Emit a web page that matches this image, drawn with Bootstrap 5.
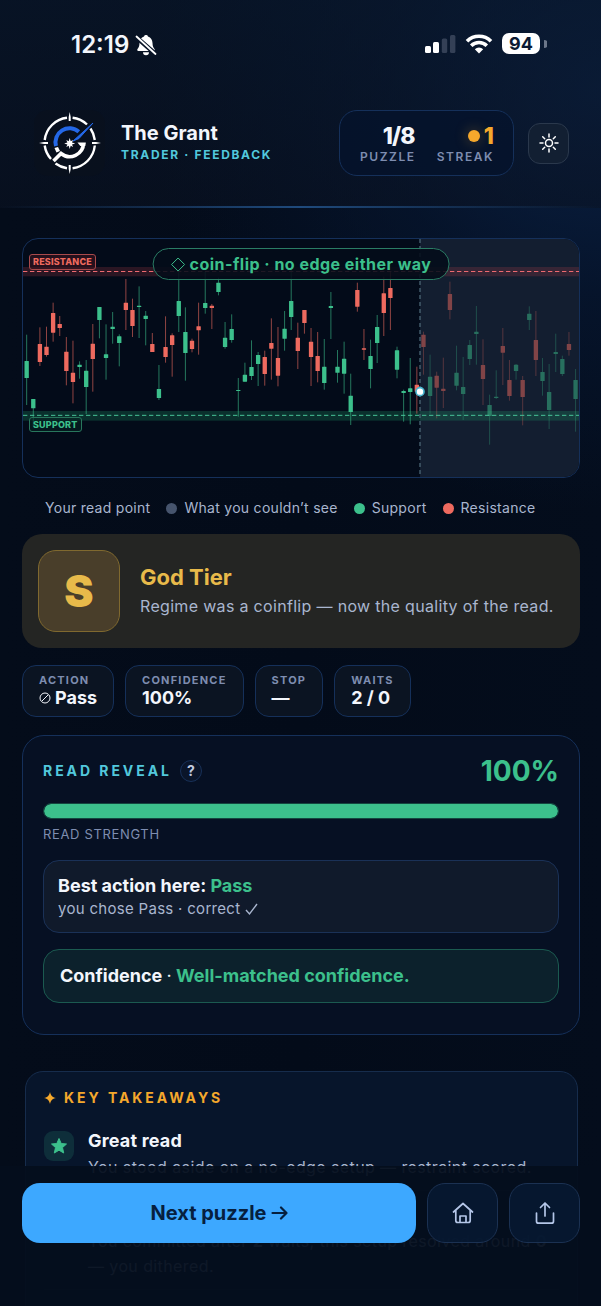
<!DOCTYPE html>
<html lang="en" data-bs-theme="dark">
<head>
<meta charset="utf-8">
<meta name="viewport" content="width=device-width, initial-scale=1">
<title>The Grant – Trader Feedback</title>
<link href="https://cdn.jsdelivr.net/npm/bootstrap@5.3.0/dist/css/bootstrap.min.css" rel="stylesheet">
<style>
  :root { --line:#15305a; --green:#3cc08c; --red:#ee6a5f; --amber:#f5a82c; --gold:#e8ba4a; --cyan:#52c8dc; --soft:#a9b6cf; --dim:#7e8db0; }
  body { font-family: Inter, "Liberation Sans", sans-serif; color:#f3f6fc; background:#030b19; }
  .screen { background: radial-gradient(ellipse 75% 420px at 100% 90px, #0a2145 0%, rgba(7,24,52,.6) 50%, transparent 100%), linear-gradient(90deg,#040c1a,#030b19 50%,#040d1c); overflow-y:auto; scrollbar-width:none; }
  .top-zone { background: linear-gradient(180deg, rgba(10,24,44,.6), rgba(10,18,34,.55)); }
  .top-rule { height:2px; background:linear-gradient(90deg, transparent, #1f4a7c 50%, transparent); }
  .status { padding:31px 54px 0 71px; height:78px; }
  .clock-row { gap:6px; }
  .clock { font-size:24px; line-height:28px; font-weight:600; }
  .signals { margin-top:2px; gap:9px; }
  .battery { width:38px; height:21px; border-radius:7px; background:#fff; color:#0b1a33; font-size:18px; line-height:21px; font-weight:700; }
  .brandbar { padding:32px 32px 30px 34px; }
  .brand-name { font-size:20px; line-height:24px; font-weight:700; }
  .brand-sub { font-size:12px; line-height:20px; font-weight:700; letter-spacing:.14em; color:var(--cyan); }
  .stats { border:1px solid var(--line); border-radius:18px; background:rgba(4,18,44,.7); padding:12px 20px 10px; gap:22px; margin-right:14px; }
  .stat-num { font-size:23px; line-height:26px; font-weight:800; letter-spacing:-.04em; }
  .stat-label { font-size:12px; line-height:16px; font-weight:600; letter-spacing:.13em; color:var(--dim); margin-right:-1px; }
  .streak-dot { width:12px; height:12px; border-radius:50%; background:var(--amber); box-shadow:0 0 14px rgba(245,168,44,.35); }
  .btn-theme { width:41px; height:41px; border-radius:12px; border:1px solid #2a384c; background:#121f32; color:#fff; }
  main { padding:30px 21px 160px 22px; }
  .chart { border:1px solid var(--line); border-radius:16px; background:#030b19; overflow:hidden; }
  .level { position:absolute; left:6px; font-size:9px; font-weight:800; letter-spacing:.02em; line-height:13px; padding:0 3px; border:1px solid; border-radius:3px; }
  .level-res { top:15px; color:var(--red); border-color:#a94a4c; background:rgba(60,20,30,.6); line-height:14px; }
  .level-sup { top:178px; color:var(--green); border-color:#28765c; background:rgba(6,34,34,.6); }
  .regime { position:absolute; top:9px; left:50%; transform:translateX(-50%); white-space:nowrap; padding:0 17px; line-height:30px; font-size:16px; font-weight:700; letter-spacing:.03em; color:var(--green); border:1px solid #2a7c64; border-radius:16px; background:rgba(3,13,25,.88); }
  .legend { font-size:14px; line-height:20px; letter-spacing:.02em; color:var(--soft); padding:20px 0 16px 23px; gap:16px; }
  .key { width:11px; height:11px; border-radius:50%; margin-right:7px; }
  .tier { border-radius:20px; background:#242523; padding:16px; gap:20px; }
  .tier-mark { width:82px; height:82px; border-radius:18px; border:1px solid #80692f; background:#493e2a; color:var(--gold); font-size:44px; line-height:48px; font-weight:900; }
  .tier-name { font-size:22px; line-height:30px; font-weight:700; color:var(--gold); }
  .tier-text { font-size:16px; line-height:28px; letter-spacing:.02em; color:var(--soft); white-space:nowrap; }
  .facts { gap:11px; padding:17px 0 18px; }
  .fact { border:1px solid var(--line); border-radius:14px; background:#0b1422; padding:7px 16px 9px; }
  .fact-label { font-size:11px; line-height:15px; font-weight:700; letter-spacing:.11em; color:var(--dim); }
  .fact-value { font-size:18px; line-height:19px; font-weight:700; }
  .reveal { border:1px solid var(--line); border-radius:22px; background:#061023; padding:17px 20px 31px; }
  .reveal-title { font-size:14px; line-height:20px; font-weight:700; letter-spacing:.21em; color:var(--cyan); }
  .btn-help { width:22px; height:22px; border:1px solid #173058; border-radius:50%; background:#0a152a; color:#c3cce0; font-size:14px; line-height:20px; font-weight:700; }
  .score { font-size:28px; line-height:36px; font-weight:700; color:var(--green); }
  .meter { height:16px; border-radius:8px; border:1px solid #14463f; background:#0a1a2a; margin:14px 0 5px; }
  .meter .progress-bar { background:var(--green); border-radius:8px; }
  .meter-label { font-size:13px; line-height:20px; letter-spacing:.05em; color:var(--dim); }
  .note { border:1px solid #1a3157; border-radius:16px; background:#101a2b; padding:13px 14px 12px; }
  .note-title { font-size:18px; line-height:24px; font-weight:700; }
  .note-text { font-size:15px; line-height:22px; letter-spacing:.02em; color:var(--soft); }
  .note-good { border-color:#1b5a50; background:#0c212c; padding:14px 16px; }
  .takeaways { border:1px solid #162c4c; border-radius:18px; background:#07152b; margin:36px 2px 0 3px; padding:16px 18px; }
  .takeaways-title { font-size:14px; line-height:20px; font-weight:700; letter-spacing:.21em; color:var(--amber); }
  .takeaway { gap:14px; padding:19px 0 10px; }
  .takeaway + .takeaway { border-top:1px solid #14243d; padding-top:10px; }
  .tile { width:30px; height:30px; border-radius:9px; background:#0e2e3a; color:var(--green); margin-top:4px; }
  .takeaway-title { font-size:18px; line-height:28px; min-height:28px; font-weight:700; letter-spacing:.01em; }
  .takeaway-text { font-size:16px; line-height:25px; letter-spacing:.025em; color:var(--soft); }
  .dock { background:rgba(4,14,29,.94); padding:17px 21px 63px 22px; gap:11px; }
  .btn-next { height:60px; border-radius:18px; background:#3da8ff; color:#06203f; font-size:20px; font-weight:700; border:0; }
  .btn-dock { width:71px; height:60px; border-radius:18px; border:1px solid #1b3152; background:rgba(7,26,51,.85); color:#b4c6e8; }
  .text-good { color:var(--green); }
</style>
</head>
<body class="vh-100 overflow-hidden">
<div class="screen h-100">
  <div class="top-zone">
    <div class="status d-flex justify-content-between align-items-start">
      <div class="clock-row d-flex align-items-center">
        <span class="clock">12:19</span>
        <svg width="22" height="22" viewBox="0 0 22 22"><path fill="#fff" d="M11 1a2 2 0 0 1 2 1.400C16 3.300 17.300 5.700 17.500 9c.1 3.500.9 4.600 2 6 .6.900.2 1.900-.8 1.900H3.300c-1 0-1.400-1-.8-1.900 1.100-1.400 1.900-2.500 2-6C4.700 5.700 6 3.300 9 2.400A2 2 0 0 1 11 1zM8 18.200h6a3 3 0 0 1-6 0z"/><path stroke="#091427" stroke-width="4.500" d="M1 3l19.500 17"/><path stroke="#fff" stroke-width="1.800" stroke-linecap="round" d="M1.500 2.500l19 17.500"/></svg>
      </div>
      <div class="signals d-flex align-items-center">
        <svg width="31" height="18" viewBox="0 0 31 18"><rect y="11" width="6" height="7" rx="1.500" fill="#fff"/><rect x="8" y="7" width="6" height="11" rx="1.500" fill="#fff"/><rect x="16.800" y="3.500" width="5.400" height="14.500" rx="1.500" fill="#344056"/><rect x="25" width="5.400" height="18" rx="1.500" fill="#344056"/></svg>
        <svg width="28" height="20" viewBox="0 0 28 20" fill="none" stroke="#fff" stroke-width="3.600"><path d="M2 7.200a17 17 0 0 1 24 0M6.200 11.700a11.200 11.200 0 0 1 15.600 0"/><path fill="#fff" stroke="none" d="M14 19.500l-4.200-4.300a6 6 0 0 1 8.400 0z"/></svg>
        <div class="d-flex align-items-center">
          <span class="battery text-center">94</span>
          <svg class="ms-1" width="3" height="8" viewBox="0 0 3 8"><path d="M0 0a4 4 0 0 1 0 8z" fill="#6b7689"/></svg>
        </div>
      </div>
    </div>
    <header class="brandbar d-flex align-items-center">
      <svg width="71" height="66" viewBox="0 0 71 66" class="flex-shrink-0" role="img" aria-label="The Grant logo">
        <rect width="71" height="66" rx="14" fill="#0a101c" opacity=".6"/>
        <g fill="none" stroke="#fff" stroke-width="2.400">
          <path d="M38.600 7.800A25.300 25.300 0 0 1 53 14.500M56.500 18.500A25.300 25.300 0 0 1 60.800 30M60.800 35.500A25.300 25.300 0 0 1 38.600 58.200M33 58.200A25.300 25.300 0 0 1 21.500 53.500M17 49A25.300 25.300 0 0 1 10.700 35.500M10.700 30A25.300 25.300 0 0 1 33 7.800"/>
        </g>
        <path fill="#fff" d="M35.700 2l1 5v4h-2V7zM35.700 64l1-5v-4h-2v4zM5 33l5-1h4v2h-4zM67 33l-5-1h-4v2h4z"/>
        <path d="M22 36A14 14 0 0 1 44.800 21.800" fill="none" stroke="#2468e8" stroke-width="4"/>
        <path d="M59 13L39 31l6-2.500z" fill="#2468e8" stroke="#2468e8"/>
        <path d="M49.500 33A13.800 13.800 0 0 1 27 43.500L19.500 51" fill="none" stroke="#fff" stroke-width="3.600"/>
        <path d="M43.500 32.500h8.300l-.5 3.500h-5z" fill="#fff"/>
        <path d="M20.500 38l3.500-1 2 4-3.500 1.500z" fill="#fff"/>
        <path fill="#fff" d="M35.700 28l1 3.200 2.400-1.100-1.100 2.400 3.200 1-3.200 1 1.100 2.400-2.400-1.100-1 3.200-1-3.200-2.400 1.100 1.100-2.400-3.200-1 3.200-1-1.100-2.400 2.400 1.100z"/>
      </svg>
      <div class="ms-3 flex-grow-1 text-nowrap">
        <div class="brand-name">The Grant</div>
        <div class="brand-sub">TRADER · FEEDBACK</div>
      </div>
      <div class="stats d-flex text-end">
        <div><div class="stat-num">1/8</div><div class="stat-label">PUZZLE</div></div>
        <div><div class="stat-num d-flex align-items-center justify-content-end gap-1" style="color:var(--amber)"><span class="streak-dot"></span>1</div><div class="stat-label">STREAK</div></div>
      </div>
      <button type="button" class="btn btn-theme p-0 d-flex align-items-center justify-content-center" aria-label="Toggle theme">
        <svg width="20" height="20" viewBox="0 0 20 20" fill="none" stroke="currentColor" stroke-width="1.500" stroke-linecap="round"><circle cx="10" cy="10" r="3.500"/><path d="M10 1v3M10 16v3M1 10h3M16 10h3M3.700 3.700l2 2M14.300 14.300l2 2M3.700 16.300l2-2M14.300 5.700l2-2"/></svg>
      </button>
    </header>
    <div class="top-rule"></div>
  </div>

  <main>
    <section class="chart position-relative" aria-label="Price chart">
      <svg id="chart" class="d-block w-100 h-auto" viewBox="0 27 1668 714">
        <rect x="1191" y="27" width="477" height="714" fill="#131e30"/>
        <rect y="111" width="1668" height="28" fill="#b9404a" opacity=".22"/>
        <rect y="543" width="1668" height="29" fill="#1f9a6a" opacity=".26"/>
        <g id="candles"></g>
        <path d="M0 124.500H1668" stroke="#ee6a70" stroke-width="3" stroke-dasharray="13 8"/>
        <path d="M0 556H1668" stroke="#48c398" stroke-width="3" stroke-dasharray="13 8"/>
        <path d="M1191 27V741" stroke="#4a6473" stroke-width="4" stroke-dasharray="12 9"/>
        <circle cx="1191" cy="485" r="12" fill="#fff" stroke="#46b4cf" stroke-width="5"/>
      </svg>
      <span class="level level-res">RESISTANCE</span>
      <span class="level level-sup">SUPPORT</span>
      <div class="regime d-flex align-items-center gap-1"><svg width="15" height="15" viewBox="0 0 15 15" fill="none" stroke="currentColor"><path d="M7.500 1l6.500 6.500-6.500 6.500L1 7.500z"/></svg><span>coin-flip · no edge either way</span></div>
    </section>

    <div class="legend d-flex align-items-center text-nowrap">
      <span>Your read point</span>
      <span class="d-flex align-items-center"><i class="key" style="background:#46546d"></i>What you couldn’t see</span>
      <span class="d-flex align-items-center"><i class="key" style="background:var(--green)"></i>Support</span>
      <span class="d-flex align-items-center"><i class="key" style="background:var(--red)"></i>Resistance</span>
    </div>

    <section class="tier d-flex align-items-center">
      <div class="tier-mark d-flex align-items-center justify-content-center flex-shrink-0">S</div>
      <div>
        <div class="tier-name">God Tier</div>
        <div class="tier-text">Regime was a coinflip — now the quality of the read.</div>
      </div>
    </section>

    <section class="facts d-flex flex-wrap">
      <div class="fact"><div class="fact-label">ACTION</div><div class="fact-value d-flex align-items-center gap-1"><svg width="12" height="12" viewBox="0 0 12 12" fill="none" stroke="currentColor"><circle cx="6" cy="6" r="5"/><path d="M3 9l6-6"/></svg>Pass</div></div>
      <div class="fact"><div class="fact-label">CONFIDENCE</div><div class="fact-value">100%</div></div>
      <div class="fact"><div class="fact-label">STOP</div><div class="fact-value">—</div></div>
      <div class="fact"><div class="fact-label">WAITS</div><div class="fact-value">2 / 0</div></div>
    </section>

    <section class="reveal">
      <div class="d-flex align-items-center justify-content-between">
        <div class="d-flex align-items-center gap-2">
          <span class="reveal-title">READ REVEAL</span>
          <button type="button" class="btn btn-help p-0" aria-label="Help">?</button>
        </div>
        <span class="score">100%</span>
      </div>
      <div class="progress meter" role="progressbar" aria-label="Read strength" aria-valuenow="100" aria-valuemin="0" aria-valuemax="100"><div class="progress-bar" style="width:100%"></div></div>
      <div class="meter-label">READ STRENGTH</div>
      <div class="note mt-3">
        <div class="note-title">Best action here: <span class="text-good">Pass</span></div>
        <div class="note-text">you chose Pass · correct <svg width="13" height="13" viewBox="0 0 13 13" fill="none" stroke="currentColor" stroke-width="1.400"><path d="M1 7l3.500 4L12 1"/></svg></div>
      </div>
      <div class="note note-good mt-3">
        <div class="note-title">Confidence <span class="fw-normal">·</span> <span class="text-good">Well-matched confidence.</span></div>
      </div>
    </section>

    <section class="takeaways">
      <div class="takeaways-title d-flex align-items-center"><svg class="me-2" width="12" height="12" viewBox="0 0 12 12"><path fill="currentColor" d="M6 0c.8 3.500 2.300 5.200 6 6-3.700.8-5.200 2.500-6 6-.8-3.500-2.300-5.200-6-6 3.700-.8 5.200-2.500 6-6z"/></svg>KEY TAKEAWAYS</div>
      <div class="takeaway d-flex">
        <div class="tile d-flex align-items-center justify-content-center flex-shrink-0"><svg width="18" height="18" viewBox="0 0 18 18"><path fill="currentColor" stroke="currentColor" stroke-linejoin="round" d="M9 1.500l2.200 5 5.300.5-4 3.600 1.200 5.400L9 13.200 4.300 16l1.200-5.400-4-3.600 5.300-.5z"/></svg></div>
        <div>
          <div class="takeaway-title">Great read</div>
          <div class="takeaway-text">You stood aside on a no-edge setup — restraint scored.</div>
        </div>
      </div>
      <div class="takeaway d-flex">
        <div class="tile flex-shrink-0"></div>
        <div>
          <div class="takeaway-title"></div>
          <div class="takeaway-text">You committed after <b>2</b> waits; this setup resolved around <b>0</b> — you dithered.</div>
        </div>
      </div>
      <div class="takeaway"></div>
    </section>
  </main>
</div>

<nav class="dock fixed-bottom d-flex" aria-label="Puzzle actions">
  <button type="button" class="btn btn-next flex-grow-1 d-flex align-items-center justify-content-center gap-1">Next puzzle <svg width="17" height="16" viewBox="0 0 17 16" fill="none" stroke="currentColor" stroke-width="2.200" stroke-linecap="round" stroke-linejoin="round"><path d="M1.500 8h14M10 2.500L15.500 8 10 13.500"/></svg></button>
  <button type="button" class="btn btn-dock p-0 d-flex align-items-center justify-content-center" aria-label="Home"><svg width="22" height="22" viewBox="0 0 22 22" fill="none" stroke="currentColor" stroke-width="1.700" stroke-linecap="round" stroke-linejoin="round"><path d="M1.500 10L11 1.500l9.500 8.500M3.800 8.500v10q0 2 2 2h10.400q2 0 2-2v-10M8 20v-6h6v6"/></svg></button>
  <button type="button" class="btn btn-dock p-0 d-flex align-items-center justify-content-center" aria-label="Share"><svg width="20" height="24" viewBox="0 0 20 24" fill="none" stroke="currentColor" stroke-width="1.700" stroke-linecap="round" stroke-linejoin="round"><path d="M10 15V2M5.500 6.500L10 2l4.500 4.500M1.500 12v8.200q0 2 2 2h13q2 0 2-2V12"/></svg></button>
</nav>

<script src="https://cdn.jsdelivr.net/npm/bootstrap@5.3.0/dist/js/bootstrap.bundle.min.js"></script>
<script>
  // Each candle: direction, high, body top, body bottom, low
  const candles = `g 314 393 444 525|g 507 507 535 590|r 292 342 396 408|r 290 350 375 380|r 218 249 308 335|r 258 282 294 318|r 321 365 423 466|r 332 428 456 520|g 394 404 411 446|g 390 422 471 552|r 282 341 387 485|g 231 231 270 325|g 283 373 384 449|g 246 290 297 341|g 313 319 339 409|r 147 218 240 300|r 206 240 288 321|g 169 227 231 324|g 243 257 267 346|r 309 342 366 366|g 405 477 504 510|r 259 351 381 398|r 310 316 345 440|g 120 213 258 306|g 232 306 369 452|r 326 332 357 367|r 218 289 301 374|g 125 219 234 251|r 222 227 234 297|g 143 158 186 196|g 276 323 351 356|g 253 297 330 338|g 444 480 483 560|g 398 434 455 455|g 331 411 438 450|g 366 375 402 468|r 362 381 432 467|r 265 339 356 449|r 291 384 437 469|g 243 296 326 362|g 120 213 261 300|r 278 323 363 417|r 240 240 279 311|r 294 335 381 468|r 306 378 423 457|g 327 410 459 479|g 186 228 234 327|g 360 410 428 458|g 335 386 431 491|g 431 497 546 585|r 158 180 230 245|r 297 355 359 390|g 329 378 417 475|g 255 291 339 399|r 140 190 249 318|r 125 174 204 300|g 350 361 419 445|g 479 483 489 575|g 384 475 486 583|r 410 464 485 551|r 305 314 351 434|g 374 440 498 551|r 425 437 473 565|r 383 476 483 534|r 155 192 240 268|g 347 428 467 481|g 381 471 492 570|g 330 345 387 405|g 228 305 312 404|r 328 405 447 525|g 494 525 558 644|g 421 500 504 507|r 294 348 368 465|r 390 450 498 512|g 402 404 423 449|r 438 450 501 586|g 229 251 270 300|r 243 330 390 438|g 384 426 453 497|g 402 486 540 597|g 311 366 372 426|g 377 387 432 438|r 306 342 360 377|g 417 450 507 605`.split('|');
  const readIndex = 60, step = 19.84;
  document.getElementById('candles').innerHTML = candles.map((c, i) => {
    const [dir, hi, top, bot, lo] = c.split(' ');
    const x = 11 + i * step, col = dir === 'g' ? '#3cc08c' : '#ee6a5f';
    return `<g fill="${col}" opacity="${i < readIndex ? 1 : .5}"><rect x="${x - 1.5}" y="${hi}" width="3" height="${lo - hi}" opacity=".6"/><rect x="${x - 6.5}" y="${top}" width="13" height="${bot - top}" rx="1"/></g>`;
  }).join('');
</script>
</body>
</html>
